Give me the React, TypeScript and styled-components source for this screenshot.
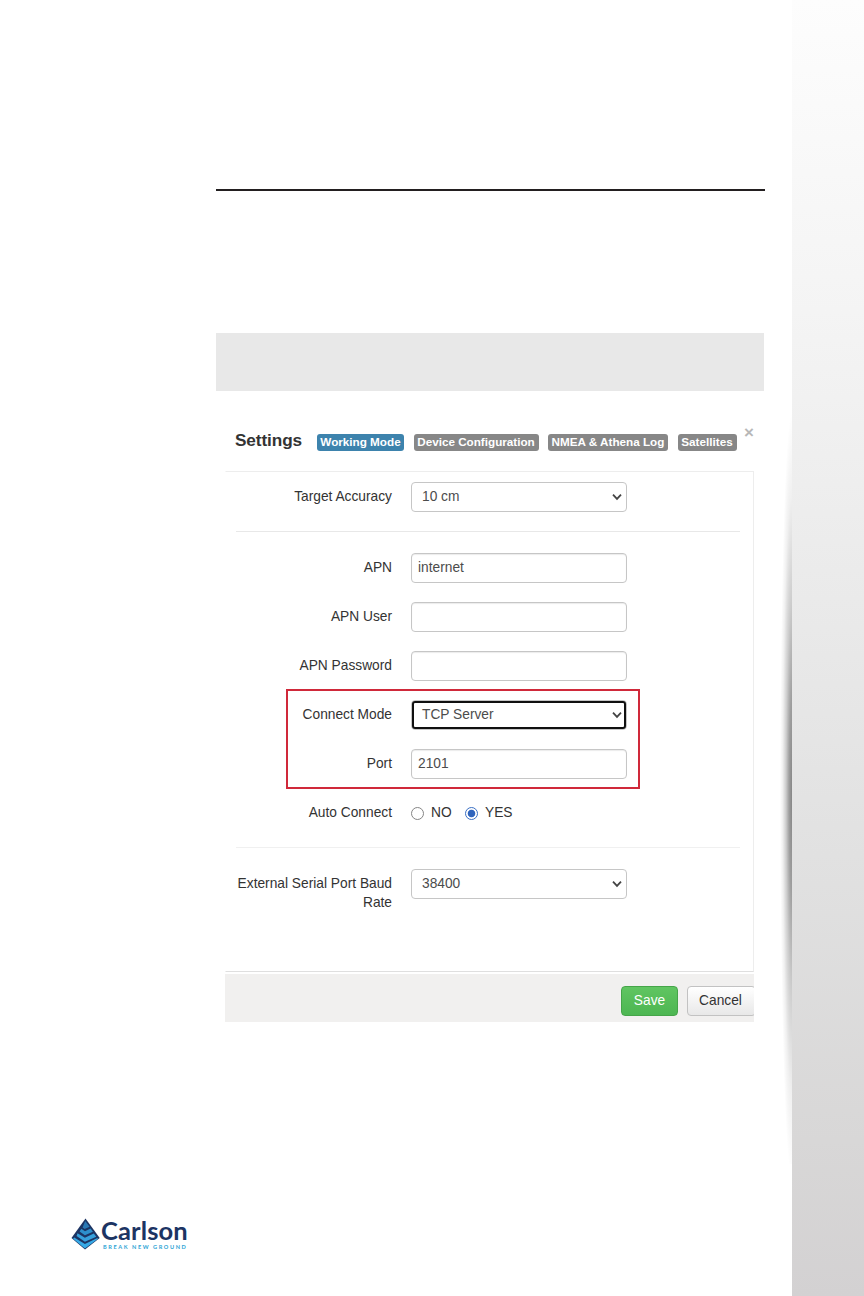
import React from "react";
import styled, { createGlobalStyle, css } from "styled-components";

const GlobalStyle = createGlobalStyle`
  *, *::before, *::after { box-sizing: border-box; }
  body {
    margin: 0;
    background: #fff;
    color: #333;
    font-family: "Liberation Sans", Arial, sans-serif;
    font-size: 13.75px;
    line-height: 20px;
  }
`;

const Page = styled.div`
  display: grid;
  grid-template-columns: 792px 72px;
  width: 864px;
  height: 1296px;
  overflow: hidden;
`;

const Sheet = styled.main`
  display: flex;
  flex-direction: column;
  padding: 189px 27px 0 216px;
`;

const SideBand = styled.aside`
  position: relative;
  background: linear-gradient(#fdfdfd 0%, #f4f4f4 24%, #ebebeb 44%, #e1e1e1 66%, #d8d7d7 88%, #d3d1d2 100%);

  &::before {
    content: "";
    position: absolute;
    left: -12px;
    top: 396px;
    width: 12px;
    height: 768px;
    background: radial-gradient(ellipse 12px 384px at 100% 52%,
      rgba(0, 0, 0, 0.48) 0%, rgba(0, 0, 0, 0.38) 25%, rgba(0, 0, 0, 0.2) 50%, rgba(0, 0, 0, 0.06) 78%, transparent 100%);
  }
`;

const Rule = styled.div`
  height: 2px;
  background: #231f20;
`;

const NoteBand = styled.div`
  width: 548px;
  height: 58px;
  margin-top: 142px;
  background: #e8e8e8;
`;

const Dialog = styled.section`
  display: flex;
  flex-direction: column;
  width: 529px;
  margin: 28px 0 0 9px;
  overflow: hidden;
`;

const DialogHeader = styled.header`
  display: flex;
  align-items: flex-start;
  height: 52px;
  padding: 9px 0 0 10px;
`;

const Title = styled.h3`
  flex: none;
  width: 82px;
  margin: 2px 0 0;
  font-size: 17.2px;
  line-height: 20px;
  font-weight: 700;
  letter-spacing: -0.1px;
  white-space: nowrap;
`;

const Tabs = styled.nav`
  display: flex;
  gap: 9.5px;
  padding-top: 6px;
`;

const Tab = styled.span<{ $active?: boolean; $width: number }>`
  flex: none;
  width: ${(p) => p.$width}px;
  height: 17px;
  border-radius: 3px;
  background: ${(p) => (p.$active ? "#3d83ad" : "#878787")};
  color: #fff;
  font-size: 11.7px;
  line-height: 16px;
  font-weight: 700;
  text-align: center;
  white-space: nowrap;
`;

const Close = styled.span`
  width: 10px;
  margin: -5px 0 0 7.4px;
  color: #b8b8b8;
  font-size: 17px;
  line-height: 20px;
  font-weight: 700;
`;

const Body = styled.div`
  height: 501px;
  padding: 10px 13px 0 10px;
  border: 1px solid #ededed;
  border-left-color: transparent;
  border-bottom-color: #dfdfdf;
`;

const Divider = styled.div<{ $soft?: boolean }>`
  height: 1px;
  margin-bottom: 21px;
  background: ${(p) => (p.$soft ? "#f0f0f0" : "#e8e8e8")};
`;

const Row = styled.div`
  display: grid;
  grid-template-columns: 156px 216px;
  column-gap: 19px;
  align-items: start;
  height: 49px;
`;

const Label = styled.label`
  padding-top: 5px;
  line-height: 19px;
  text-align: right;
  white-space: pre-line;
`;

const Field = styled.div<{ $focus?: boolean; $select?: boolean }>`
  display: flex;
  justify-content: space-between;
  align-items: center;
  height: 30px;
  padding: 0 4px 1px ${(p) => (p.$select ? 10 : 6)}px;
  border: 1px solid #c6c6c6;
  border-radius: 4px;
  background: #fff;
  color: #4c4c4c;
  ${(p) =>
    !p.$select &&
    css`
      box-shadow: inset 0 1px 1px rgba(0, 0, 0, 0.08);
    `}
  ${(p) =>
    p.$focus &&
    css`
      outline: 2px solid #101010;
      outline-offset: -3px;
    `}
`;

const Highlighted = styled.div`
  position: relative;

  &::after {
    content: "";
    position: absolute;
    left: 50px;
    top: -11px;
    width: 354px;
    height: 100px;
    border: 2px solid #d0293a;
  }
`;

const Radios = styled.div`
  display: flex;
  align-items: flex-start;
  padding-top: 5px;
`;

const Choice = styled.span<{ $width: number }>`
  display: flex;
  align-items: center;
  gap: 7px;
  width: ${(p) => p.$width}px;
  height: 20px;
`;

const RadioDot = styled.span<{ $on?: boolean }>`
  width: 13px;
  height: 13px;
  margin-top: 1px;
  border: 1px solid ${(p) => (p.$on ? "#3a6fc4" : "#858585")};
  border-radius: 50%;
  background: ${(p) => (p.$on ? "radial-gradient(circle, #2f64bd 3.4px, #fff 4.2px)" : "#fff")};
`;

const DialogFooter = styled.footer`
  display: flex;
  gap: 9px;
  height: 48px;
  margin-top: 2px;
  padding: 12px 0 0 396px;
  background: #f1f0ef;
`;

const Button = styled.button<{ $primary?: boolean }>`
  flex: none;
  width: ${(p) => (p.$primary ? 57 : 69)}px;
  height: 30px;
  padding: ${(p) => (p.$primary ? "0 0 1px" : "0 2px 1px 0")};
  border: 1px solid ${(p) => (p.$primary ? "#45a549" : "#c2c2c2")};
  border-radius: 4px;
  background: ${(p) => (p.$primary ? "linear-gradient(#60c561, #4db652)" : "linear-gradient(#ffffff, #e8e8e8)")};
  color: ${(p) => (p.$primary ? "#fff" : "#333")};
  font: inherit;
`;

const Brand = styled.div`
  display: flex;
  gap: 1px;
  margin: 196px 0 0 -145px;
`;

const BrandText = styled.div`
  display: flex;
  flex-direction: column;
`;

const BrandName = styled.span`
  color: #1c3463;
  font-family: Lato, sans-serif;
  font-size: 25.5px;
  line-height: 25px;
  font-weight: 700;
  letter-spacing: 0.12px;
`;

const Tagline = styled.span`
  margin-left: 2px;
  color: #2ba3d4;
  font-family: Lato, sans-serif;
  font-size: 5.6px;
  line-height: 7px;
  font-weight: 700;
  letter-spacing: 1.58px;
  white-space: nowrap;
`;

const Chevron = () => (
  <svg width="10" height="8" viewBox="0 0 10 8" fill="none">
    <path d="M1 1.7 5 5.9 9 1.7" stroke="#444" strokeWidth="1.8" />
  </svg>
);

const Pyramid = () => (
  <svg width="29" height="32" viewBox="0 0 29 32">
    <path d="M14.5 0.5 28.7 20 14 31.5 0.5 20Z" fill="#1c3463" />
    <path d="M14.2 3 18.6 8.8 13.6 10.9 11.6 9.6Z" fill="#2a79b5" />
    <path d="M10.3 10.7 14 13.3 19.6 10.6 21.9 13.8 13.9 17.2 8.6 13.5Z" fill="#2d8fcc" />
    <path d="M6.5 15.2 13.9 19.7 22.8 15.5 25.3 18.8 13.9 23.7 5.6 18Z" fill="#36a0dc" />
    <path d="M3.2 19.6 13.9 25.9 25.9 20.2 27.4 20.4 13.9 30.6 2.1 20.7Z" fill="#36a9e6" />
  </svg>
);

const TextRow = ({ label, value, select, focus }: { label: string; value?: string; select?: boolean; focus?: boolean }) => (
  <Row>
    <Label>{label}</Label>
    <Field $select={select} $focus={focus}>
      <span>{value}</span>
      {select && <Chevron />}
    </Field>
  </Row>
);

export default function App() {
  return (
    <Page>
      <GlobalStyle />
      <Sheet>
        <Rule />
        <NoteBand />
        <Dialog>
          <DialogHeader>
            <Title>Settings</Title>
            <Tabs>
              <Tab $active $width={87}>Working Mode</Tab>
              <Tab $width={125}>Device Configuration</Tab>
              <Tab $width={120}>NMEA &amp; Athena Log</Tab>
              <Tab $width={59}>Satellites</Tab>
            </Tabs>
            <Close>×</Close>
          </DialogHeader>
          <Body>
            <TextRow label="Target Accuracy" value="10 cm" select />
            <Divider />
            <TextRow label="APN" value="internet" />
            <TextRow label="APN User" />
            <TextRow label="APN Password" />
            <Highlighted>
              <TextRow label="Connect Mode" value="TCP Server" select focus />
              <TextRow label="Port" value="2101" />
            </Highlighted>
            <Row>
              <Label>Auto Connect</Label>
              <Radios>
                <Choice $width={54}><RadioDot />NO</Choice>
                <Choice $width={60}><RadioDot $on />YES</Choice>
              </Radios>
            </Row>
            <Divider $soft />
            <TextRow label={"External Serial Port Baud\nRate"} value="38400" select />
          </Body>
          <DialogFooter>
            <Button $primary>Save</Button>
            <Button>Cancel</Button>
          </DialogFooter>
        </Dialog>
        <Brand>
          <Pyramid />
          <BrandText>
            <BrandName>Carlson</BrandName>
            <Tagline>BREAK NEW GROUND</Tagline>
          </BrandText>
        </Brand>
      </Sheet>
      <SideBand />
    </Page>
  );
}
